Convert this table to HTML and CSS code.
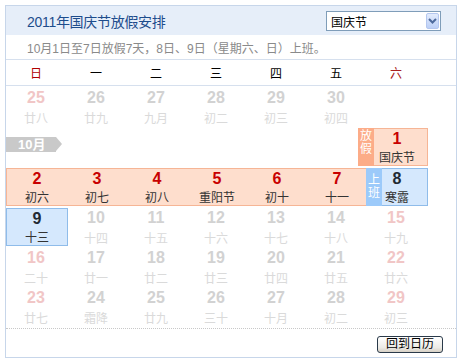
FILE: index.html
```html
<!DOCTYPE html>
<html lang="zh-CN">
<head>
<meta charset="utf-8">
<link rel="stylesheet" href="styles.css">
</head>
<body>
<div class="cal">
  <div class="head">
    <div class="title">2011年国庆节放假安排</div>
    <div class="select">
      <span class="sel-text">国庆节</span>
      <span class="sel-btn"><svg width="9" height="6" viewBox="0 0 9 6"><path d="M1 1 L4.5 4.5 L8 1" fill="none" stroke="#4d6a9c" stroke-width="2"/></svg></span>
    </div>
  </div>
  <div class="note">10月1日至7日放假7天，8日、9日（星期六、日）上班。</div>
  <div class="week">
    <span class="wk sun">日</span><span class="wk">一</span><span class="wk">二</span><span class="wk">三</span><span class="wk">四</span><span class="wk">五</span><span class="wk sat">六</span>
  </div>
  <div class="grid">
    <div class="day off wkend"><div class="num">25</div><div class="lunar">廿八</div></div>
    <div class="day off"><div class="num">26</div><div class="lunar">廿九</div></div>
    <div class="day off"><div class="num">27</div><div class="lunar">九月</div></div>
    <div class="day off"><div class="num">28</div><div class="lunar">初二</div></div>
    <div class="day off"><div class="num">29</div><div class="lunar">初三</div></div>
    <div class="day off"><div class="num">30</div><div class="lunar">初四</div></div>
    <div class="day"></div>

    <div class="month-cell"><span class="month">10月</span></div>
    <div class="day"></div><div class="day"></div><div class="day"></div><div class="day"></div><div class="day"></div>
    <div class="day hol single"><span class="tag tag-rest">放假</span><div class="num">1</div><div class="lunar">国庆节</div></div>

    <div class="bar">
      <div class="day in"><div class="num">2</div><div class="lunar">初六</div></div>
      <div class="day in"><div class="num">3</div><div class="lunar">初七</div></div>
      <div class="day in"><div class="num">4</div><div class="lunar">初八</div></div>
      <div class="day in"><div class="num">5</div><div class="lunar">重阳节</div></div>
      <div class="day in"><div class="num">6</div><div class="lunar">初十</div></div>
      <div class="day in"><div class="num">7</div><div class="lunar">十一</div></div>
    </div>
    <div class="day work"><span class="tag tag-work">上班</span><div class="num">8</div><div class="lunar">寒露</div></div>

    <div class="day work"><div class="num">9</div><div class="lunar">十三</div></div>
    <div class="day off"><div class="num">10</div><div class="lunar">十四</div></div>
    <div class="day off"><div class="num">11</div><div class="lunar">十五</div></div>
    <div class="day off"><div class="num">12</div><div class="lunar">十六</div></div>
    <div class="day off"><div class="num">13</div><div class="lunar">十七</div></div>
    <div class="day off"><div class="num">14</div><div class="lunar">十八</div></div>
    <div class="day off wkend"><div class="num">15</div><div class="lunar">十九</div></div>

    <div class="day off wkend"><div class="num">16</div><div class="lunar">二十</div></div>
    <div class="day off"><div class="num">17</div><div class="lunar">廿一</div></div>
    <div class="day off"><div class="num">18</div><div class="lunar">廿二</div></div>
    <div class="day off"><div class="num">19</div><div class="lunar">廿三</div></div>
    <div class="day off"><div class="num">20</div><div class="lunar">廿四</div></div>
    <div class="day off"><div class="num">21</div><div class="lunar">廿五</div></div>
    <div class="day off wkend"><div class="num">22</div><div class="lunar">廿六</div></div>

    <div class="day off wkend"><div class="num">23</div><div class="lunar">廿七</div></div>
    <div class="day off"><div class="num">24</div><div class="lunar">霜降</div></div>
    <div class="day off"><div class="num">25</div><div class="lunar">廿九</div></div>
    <div class="day off"><div class="num">26</div><div class="lunar">三十</div></div>
    <div class="day off"><div class="num">27</div><div class="lunar">十月</div></div>
    <div class="day off"><div class="num">28</div><div class="lunar">初二</div></div>
    <div class="day off wkend"><div class="num">29</div><div class="lunar">初三</div></div>
  </div>
  <div class="foot"><span class="back">回到日历</span></div>
</div>
</body>
</html>
```

FILE: styles.css
```css
* { box-sizing: border-box; }
body {
  margin: 0;
  background: #fff;
  font-family: "Liberation Sans", "Noto Sans CJK SC", sans-serif;
  font-size: 12px;
  color: #000;
}
.cal {
  margin: 5px 0 0 5px;
  width: 452px;
  height: 353px;
  border: 1px solid #c7d6ea;
  display: flex;
  flex-direction: column;
}
.head {
  height: 29px;
  background: #e6eef9;
  display: flex;
  align-items: center;
  justify-content: space-between;
  padding: 0 15px 0 21px;
}
.title {
  font-size: 14px;
  color: #1d4c8c;
  letter-spacing: -0.3px;
}
.select {
  width: 115px;
  height: 20px;
  border: 1px solid #7f9db9;
  background: #fff;
  display: flex;
  align-items: center;
  justify-content: space-between;
  padding: 0 1px 0 4px;
  margin-top: 1px;
}
.sel-text { font-size: 12px; color: #000; }
.sel-btn {
  width: 13px;
  height: 16px;
  background: linear-gradient(#e3ecfd, #bccff6);
  border: 1px solid #b4c7ef;
  border-radius: 2px;
  display: flex;
  align-items: center;
  justify-content: center;
}
.note {
  height: 25px;
  border-bottom: 1px solid #d6e0ee;
  color: #8a8a8a;
  padding-left: 21px;
  display: flex;
  align-items: center;
}
.week {
  height: 26px;
  border-bottom: 1px solid #d6e0ee;
  display: grid;
  grid-template-columns: repeat(7, 60px);
  align-items: center;
}
.wk { text-align: center; }
.wk.sun { color: #b00000; }
.wk.sat { color: #a82020; }
.grid {
  display: grid;
  grid-template-columns: repeat(7, 60px);
  grid-template-rows: repeat(6, 40px);
  height: 243px;
  border-bottom: 1px dotted #c8c8c8;
}
.day {
  position: relative;
  text-align: center;
  padding-top: 2px;
}
.num {
  font-weight: bold;
  font-size: 16px;
  line-height: 20px;
  color: #333;
}
.lunar {
  font-size: 12px;
  line-height: 16px;
  padding-top: 3px;
  color: #333;
  white-space: nowrap;
}
.off .num { color: #d2d2d2; }
.off.wkend .num { color: #f1c6c6; }
.off .lunar { color: #dadada; }
.month-cell {
  display: flex;
  align-items: flex-start;
  padding-top: 11px;
}
.month {
  position: relative;
  height: 15px;
  width: 50px;
  background: #c9c9c9;
  color: #fff;
  font-weight: bold;
  font-size: 13px;
  line-height: 15px;
  padding-left: 12px;
}
.month::after {
  content: "";
  position: absolute;
  left: 50px;
  top: 0;
  border-left: 6px solid #c9c9c9;
  border-top: 7.5px solid transparent;
  border-bottom: 7.5px solid transparent;
}
.hol, .bar, .work {
  margin-top: 2px;
  padding-top: 0;
}
.hol {
  width: 62px;
  height: 38px;
  background: #fedecd;
  border: 1px solid #f6b595;
}
.hol .lunar, .work .lunar, .bar .lunar { line-height: 14px; padding-top: 2px; }
.bar {
  grid-column: 1 / span 6;
  width: 362px;
  height: 38px;
  background: #fedecd;
  border: 1px solid #f6b595;
  display: grid;
  grid-template-columns: repeat(6, 60px);
  position: relative;
  z-index: 0;
}
.bar .day { padding-top: 0; }
.bar .num, .hol .num { color: #c80000; }
.work {
  width: 62px;
  height: 38px;
  background: #d5e8fd;
  border: 1px solid #8fbcea;
}
.work .num { color: #222a33; }
.tag {
  position: absolute;
  top: -1px;
  width: 16px;
  height: 38px;
  color: #fff;
  font-size: 12px;
  line-height: 13px;
  display: flex;
  flex-direction: column;
  align-items: center;
  justify-content: center;
  z-index: 2;
  word-break: break-all;
  white-space: normal;
  text-align: center;
}
.tag-rest {
  left: -9px;
  background: #fcac88;
  padding-bottom: 8px;
}
.tag-work {
  left: -1px;
  background: #9ccafa;
}
.foot {
  flex: 1;
  display: flex;
  justify-content: flex-end;
  align-items: flex-start;
  padding: 7px 13px 0 0;
}
.back {
  width: 66px;
  height: 17px;
  border: 1px solid #2a3a4a;
  border-radius: 3px;
  background: linear-gradient(#ffffff, #ecebe6 70%, #d6d0c5);
  font-size: 12px;
  line-height: 15px;
  text-align: center;
  color: #000;
}
```
